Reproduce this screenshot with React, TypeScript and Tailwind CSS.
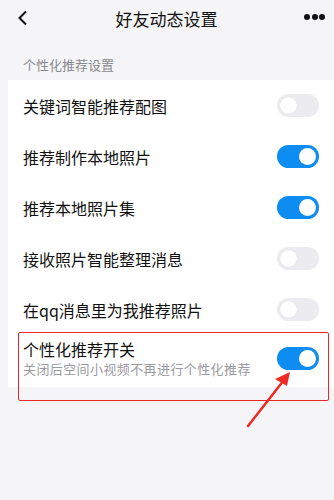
import React from 'react';

const Toggle = ({ on }: { on: boolean }) => (
  <div
    className={
      on
        ? 'w-[42px] h-[23px] rounded-full bg-[#0d8cf2] flex items-center justify-end pr-[3px]'
        : 'w-[42px] h-[23px] rounded-full bg-[#ececf0] flex items-center justify-start pl-[3px]'
    }
  >
    <div className={on ? 'w-[17px] h-[17px] rounded-full bg-white' : 'w-[17px] h-[17px] rounded-full bg-white shadow-[0_0_1px_rgba(0,0,0,0.15)]'} />
  </div>
);

const rows = [
  { label: '关键词智能推荐配图', on: false },
  { label: '推荐制作本地照片', on: true },
  { label: '推荐本地照片集', on: true },
  { label: '接收照片智能整理消息', on: false },
  { label: '在qq消息里为我推荐照片', on: false },
];

const App = () => {
  return (
    <div
      className="relative w-[334px] h-[500px] bg-[#f5f5f7] overflow-hidden"
      style={{ fontFamily: '"Noto Sans CJK SC", "Noto Sans", sans-serif' }}
    >
      <div className="h-[38px] flex items-center justify-between px-[16px]">
        <svg width="12" height="16" viewBox="0 0 12 16" className="ml-[1px] mt-[-3px]">
          <path d="M9 1.5 L2.5 8 L9 14.5" fill="none" stroke="#111" strokeWidth="2" />
        </svg>
        <div className="text-[17px] text-[#111] leading-none mt-[-1px]">好友动态设置</div>
        <div className="flex gap-[1.5px] mr-[-7px] mt-[-4px]">
          <span className="w-[6px] h-[6px] rounded-full bg-[#111]" />
          <span className="w-[6px] h-[6px] rounded-full bg-[#111]" />
          <span className="w-[6px] h-[6px] rounded-full bg-[#111]" />
        </div>
      </div>

      <div className="pl-[23px] pt-[20px] h-[42px] text-[13px] text-[#8a8a8e] leading-none">个性化推荐设置</div>

      <div className="ml-[8px] bg-white pb-[10px]">
        {rows.map((r) => (
          <div key={r.label} className="h-[51px] flex items-center justify-between pl-[15px] pr-[15px]">
            <span className="text-[16px] text-[#111]">{r.label}</span>
            <Toggle on={r.on} />
          </div>
        ))}
        <div className="flex items-center justify-between pl-[15px] pr-[15px] pt-[4px]">
          <div className="flex flex-col">
            <span className="text-[16px] text-[#111] leading-[21px]">个性化推荐开关</span>
            <span className="text-[13px] tracking-[0.4px] text-[#9a9a9e] leading-[17px]">关闭后空间小视频不再进行个性化推荐</span>
          </div>
          <Toggle on={true} />
        </div>
      </div>

      <div className="absolute left-[18px] top-[332px] w-[311px] h-[69px] border-[1.5px] border-[#e8262a] rounded-[2px]" />

      <svg className="absolute left-0 top-0" width="334" height="500" viewBox="0 0 334 500">
        <line x1="248" y1="426" x2="284" y2="380" stroke="#ee2a22" strokeWidth="2.5" strokeLinecap="round" />
        <polygon points="290,372 275,379 287,386" fill="#ee2a22" />
      </svg>
    </div>
  );
};

export default App;
